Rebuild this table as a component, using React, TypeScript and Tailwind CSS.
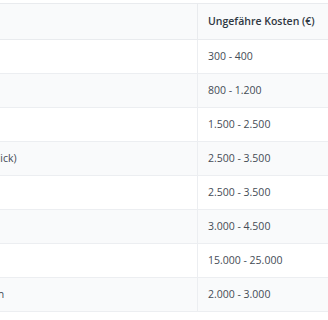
import React from "react";

const rows: [string, string][] = [
  ["Erdarbeiten und Aushub", "300 - 400"],
  ["Fundament und Bodenplatte", "800 - 1.200"],
  ["Kellerabdichtung", "1.500 - 2.500"],
  ["Außenwanddämmung (WDVS, 14 cm dick)", "2.500 - 3.500"],
  ["Dachdämmung", "2.500 - 3.500"],
  ["Fenster und Außentüren", "3.000 - 4.500"],
  ["Komplette Dachsanierung", "15.000 - 25.000"],
  ["Badezimmer vollständig modernisieren", "2.000 - 3.000"],
];

export default function App() {
  return (
    <div
      className="w-[328px] h-[320px] overflow-hidden bg-white pt-[3px]"
      style={{ fontFamily: '"Open Sans", "Noto Sans", sans-serif' }}
    >
      <table className="-ml-[200px] w-[640px] border-collapse text-[10.5px] table-fixed">
        <thead>
          <tr className="bg-[#f9fafb]">
            <th className="w-[397px] border border-[#e9ebee] px-[11px] h-[36px] text-left font-semibold text-[#2f3742]">
              Leistung
            </th>
            <th className="border border-[#e9ebee] px-[10px] h-[36px] text-left font-semibold text-[#2f3742]">
              Ungefähre Kosten (€)
            </th>
          </tr>
        </thead>
        <tbody>
          {rows.map(([a, b], i) => (
            <tr key={i} className={i % 2 === 1 ? "bg-[#f9fafb]" : "bg-white"}>
              <td className="border border-[#eceef1] px-[11px] h-[34px] text-[#454c56] whitespace-nowrap">
                {a}
              </td>
              <td className="border border-[#eceef1] px-[10px] h-[34px] text-[#454c56]">
                {b}
              </td>
            </tr>
          ))}
        </tbody>
      </table>
    </div>
  );
}
